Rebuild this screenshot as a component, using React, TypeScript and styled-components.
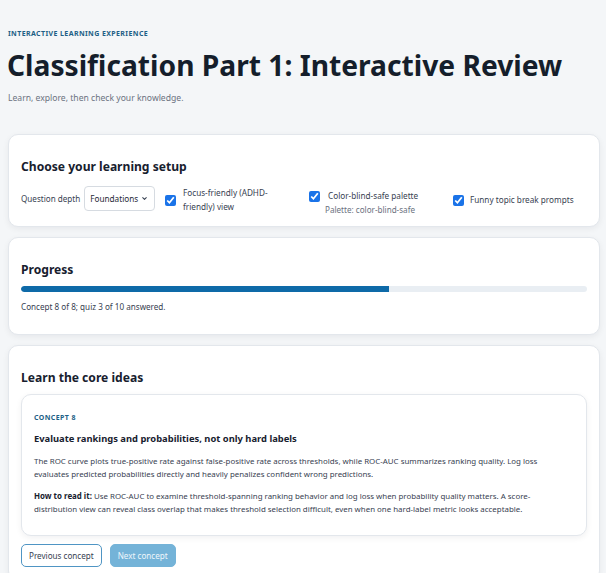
import React from "react";
import styled, { createGlobalStyle } from "styled-components";
import { ChevronDown } from "lucide-react";

const Global = createGlobalStyle`
  * { box-sizing: border-box; }
  html, body { margin: 0; padding: 0; background: #f4f6f8; }
  body { font-family: "Noto Sans", "Open Sans", sans-serif; color: #1f2937; }
`;

const Page = styled.div`
  padding: 28px 6px 8px 8px;
`;

const Header = styled.header`
  margin-bottom: 30px;
`;

const Eyebrow = styled.div`
  font-size: 7px;
  font-weight: 700;
  letter-spacing: 0.4px;
  text-transform: uppercase;
  color: #1d5f86;
  line-height: 12px;
`;

const Title = styled.h1`
  margin: 5px 0 0 -1px;
  font-size: 28.2px;
  font-weight: 700;
  line-height: 40px;
  color: #151e2b;
  white-space: nowrap;
`;

const Subtitle = styled.p`
  margin: 7px 0 0;
  font-size: 8.6px;
  line-height: 12px;
  color: #6b7280;
`;

const Stack = styled.div`
  display: flex;
  flex-direction: column;
  gap: 10px;
`;

const Card = styled.section`
  background: #fff;
  border: 1px solid #e3e7ec;
  border-radius: 10px;
  box-shadow: 0 2px 6px rgba(15, 23, 42, 0.06);
  padding: 22px 12px 13px;
`;

const CardTitle = styled.h2`
  margin: 0 0 6px;
  font-size: 12.1px;
  line-height: 20px;
  font-weight: 700;
  color: #17202e;
`;

const Controls = styled.div`
  display: grid;
  grid-template-columns: repeat(4, minmax(0, 1fr));
  gap: 10px;
  align-items: start;
  margin: 2px 0 -3px;
`;

const Field = styled.label`
  display: flex;
  align-items: center;
  gap: 4px;
  margin-top: 3px;
  font-size: 8.1px;
  color: #374151;
  white-space: nowrap;
`;

const SelectWrap = styled.span`
  position: relative;
  display: inline-flex;
`;

const Select = styled.select`
  appearance: none;
  font-family: inherit;
  font-size: 8.2px;
  color: #1f2937;
  height: 25px;
  width: 71px;
  padding: 0 14px 0 5px;
  border: 1px solid #d6dbe1;
  border-radius: 4px;
  background: #fff;
`;

const Chevron = styled(ChevronDown)`
  position: absolute;
  right: 7px;
  top: 9px;
  pointer-events: none;
  color: #374151;
`;

const CheckItem = styled.div<{ $offset: number }>`
  display: flex;
  flex-direction: column;
  gap: 1px;
  margin-top: ${(p) => p.$offset}px;
`;

const CheckRow = styled.label<{ $gap?: number }>`
  display: flex;
  align-items: center;
  gap: ${(p) => p.$gap ?? 7}px;
  font-size: 8.2px;
  line-height: 14px;
  color: #374151;
`;

const Box = styled.input`
  width: 11px;
  height: 11px;
  margin: 0;
  flex: none;
  accent-color: #1a73e8;
`;

const Note = styled.span`
  margin-left: 16px;
  font-size: 8.1px;
  line-height: 12px;
  color: #6b7280;
`;

const Track = styled.div`
  height: 6px;
  border-radius: 3px;
  background: #e9eef3;
  overflow: hidden;
`;

const Fill = styled.div`
  height: 100%;
  background: #0e6aa8;
  border-radius: 3px 0 0 3px;
`;

const Meta = styled.p`
  margin: 9px 0 8px;
  font-size: 8.15px;
  line-height: 12px;
  color: #374151;
`;

const Concept = styled.article`
  border: 1px solid #e3e7ec;
  border-radius: 10px;
  background: #fff;
  box-shadow: 0 2px 6px rgba(15, 23, 42, 0.06);
  padding: 18px 20px 19px 12px;
`;

const ConceptTag = styled.div`
  font-size: 7px;
  font-weight: 700;
  letter-spacing: 0.4px;
  text-transform: uppercase;
  color: #1d5f86;
  line-height: 10px;
`;

const ConceptTitle = styled.h3`
  margin: 7.5px 0 9px;
  font-size: 9.4px;
  line-height: 15px;
  font-weight: 700;
  color: #17202e;
  white-space: nowrap;
`;

const Para = styled.p`
  margin: 0 0 9px;
  font-size: 7.9px;
  line-height: 13px;
  color: #374151;
  &:last-child { margin-bottom: 0; }
  strong { color: #17202e; }
`;

const Buttons = styled.div`
  display: flex;
  gap: 8px;
  margin-top: 8px;
`;

const Button = styled.button<{ $primary?: boolean }>`
  font-family: inherit;
  font-size: 8.1px;
  height: 23px;
  padding: 0 7px;
  border-radius: 5px;
  border: 1px solid ${(p) => (p.$primary ? "#74b3d8" : "#4f95c4")};
  background: ${(p) => (p.$primary ? "#74b3d8" : "#fff")};
  color: ${(p) => (p.$primary ? "#eef6fb" : "#374151")};
`;

export default function App() {
  const progress = 65;
  return (
    <>
      <Global />
      <Page>
        <Header>
          <Eyebrow>Interactive learning experience</Eyebrow>
          <Title>Classification Part 1: Interactive Review</Title>
          <Subtitle>Learn, explore, then check your knowledge.</Subtitle>
        </Header>
        <Stack>
          <Card>
            <CardTitle>Choose your learning setup</CardTitle>
            <Controls>
              <Field>
                Question depth
                <SelectWrap>
                  <Select defaultValue="Foundations">
                    <option>Foundations</option>
                    <option>Intermediate</option>
                    <option>Advanced</option>
                  </Select>
                  <Chevron size={7} strokeWidth={3.5} />
                </SelectWrap>
              </Field>
              <CheckItem $offset={3}>
                <CheckRow>
                  <Box type="checkbox" defaultChecked />
                  <span>Focus-friendly (ADHD-friendly) view</span>
                </CheckRow>
              </CheckItem>
              <CheckItem $offset={6}>
                <CheckRow $gap={8}>
                  <Box type="checkbox" defaultChecked />
                  <span>Color-blind-safe palette</span>
                </CheckRow>
                <Note>Palette: color-blind-safe</Note>
              </CheckItem>
              <CheckItem $offset={10}>
                <CheckRow $gap={6}>
                  <Box type="checkbox" defaultChecked />
                  <span>Funny topic break prompts</span>
                </CheckRow>
              </CheckItem>
            </Controls>
          </Card>
          <Card>
            <CardTitle>Progress</CardTitle>
            <Track>
              <Fill style={{ width: `${progress}%` }} />
            </Track>
            <Meta>Concept 8 of 8; quiz 3 of 10 answered.</Meta>
          </Card>
          <Card>
            <CardTitle>Learn the core ideas</CardTitle>
            <Concept>
              <ConceptTag>Concept 8</ConceptTag>
              <ConceptTitle>Evaluate rankings and probabilities, not only hard labels</ConceptTitle>
              <Para>
                The ROC curve plots true-positive rate against false-positive rate across thresholds, while ROC-AUC
                summarizes ranking quality. Log loss evaluates predicted probabilities directly and heavily penalizes
                confident wrong predictions.
              </Para>
              <Para>
                <strong>How to read it:</strong> Use ROC-AUC to examine threshold-spanning ranking behavior and log loss
                when probability quality matters. A score-distribution view can reveal class overlap that makes
                threshold selection difficult, even when one hard-label metric looks acceptable.
              </Para>
            </Concept>
            <Buttons>
              <Button>Previous concept</Button>
              <Button $primary>Next concept</Button>
            </Buttons>
          </Card>
        </Stack>
      </Page>
    </>
  );
}
